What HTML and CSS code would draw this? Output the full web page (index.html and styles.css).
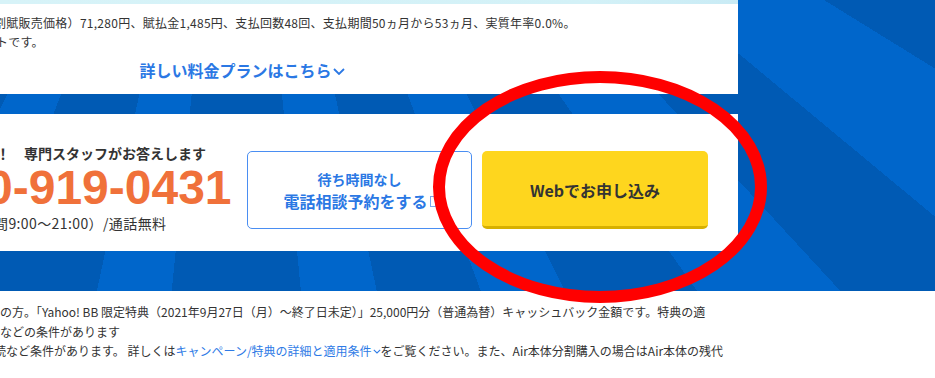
FILE: index.html
```html
<!DOCTYPE html>
<html lang="ja">
<head>
<meta charset="utf-8">
<title>Plan</title>
<link rel="stylesheet" href="styles.css">
</head>
<body>
<div class="page">
  <div class="hero">
    <section class="plan-card">
      <div class="plan-strip"></div>
      <div class="plan-body">
        <p class="note note-1">割賦販売価格）71,280円、賦払金1,485円、支払回数48回、支払期間50ヵ月から53ヵ月、実質年率0.0%。</p>
        <p class="note note-2">トです。</p>
        <a class="plan-link" href="#">詳しい料金プランはこちら<svg class="chev chev-lg" viewBox="0 0 12 7" width="12" height="7"><path d="M1 1 L6 6 L11 1" fill="none" stroke="currentColor" stroke-width="1.8"/></svg></a>
      </div>
    </section>
    <section class="contact-card">
      <div class="contact-info">
        <p class="contact-lead">！　専門スタッフがお答えします</p>
        <p class="contact-tel">0-919-0431</p>
        <p class="contact-hours">間9:00～21:00）/通話無料</p>
      </div>
      <a class="btn btn-reserve" href="#">
        <span class="btn-sub">待ち時間なし</span>
        <span class="btn-main">電話相談予約をする<span class="ext-icon"></span></span>
      </a>
      <a class="btn btn-apply" href="#">Webでお申し込み</a>
    </section>
  </div>
  <div class="footnotes">
    <p class="fn">の方。「Yahoo! BB 限定特典（2021年9月27日（月）～終了日未定）」25,000円分（普通為替）キャッシュバック金額です。特典の適</p>
    <p class="fn">などの条件があります</p>
    <p class="fn fn-cut">続など条件があります。 詳しくは<a class="fn-link" href="#">キャンペーン/特典の詳細と適用条件<svg class="chev chev-sm" viewBox="0 0 8 5" width="8" height="5"><path d="M0.8 0.8 L4 4 L7.2 0.8" fill="none" stroke="currentColor" stroke-width="1.1"/></svg></a>をご覧ください。また、Air本体分割購入の場合はAir本体の残代</p>
  </div>
  <svg class="annotation" width="340" height="240" viewBox="0 0 340 240">
    <ellipse cx="170" cy="118" rx="161" ry="110" fill="none" stroke="#ff0000" stroke-width="12"/>
  </svg>
</div>
</body>
</html>
```

FILE: styles.css
```css
* { box-sizing: border-box; }
html, body { margin: 0; padding: 0; }
body {
  width: 935px;
  height: 378px;
  overflow: hidden;
  background: #fff;
  font-family: "Noto Sans CJK JP", "Noto Sans", sans-serif;
  color: #333;
}
p { margin: 0; }
a { text-decoration: none; }

.page {
  position: relative;
  width: 935px;
  height: 378px;
}

.hero {
  height: 291px;
  padding-bottom: 40px;
  display: flex;
  flex-direction: column;
  gap: 20px;
  background:
    conic-gradient(from 0deg at 238px -362px,
      #005ab4 0deg 121.7deg,
      #0066cb 121.7deg 129.7deg,
      #005ab4 129.7deg 137.3deg,
      #0066cb 137.3deg 144.9deg,
      #005ab4 144.9deg 153.4deg,
      #0066cb 153.4deg 159.6deg,
      #005ab4 159.6deg 168deg,
      #0066cb 168deg 174.5deg,
      #005ab4 174.5deg 185.8deg,
      #0066cb 185.8deg 192.2deg,
      #005ab4 192.2deg 201.2deg,
      #0066cb 201.2deg 206.8deg,
      #005ab4 206.8deg 215deg,
      #0066cb 215deg 221deg,
      #005ab4 221deg 360deg);
}

/* top plan card */
.plan-card {
  width: 738px;
  height: 94px;
  background: #fff;
  flex: none;
}
.plan-strip {
  height: 4px;
  background: linear-gradient(90deg, #d7f3f8 0%, #d3f1f7 80%, #c9ebf5 100%);
}
.plan-body {
  padding-top: 9px;
  display: flex;
  flex-direction: column;
  white-space: nowrap;
}
.note {
  font-size: 12px;
  line-height: 19px;
  color: #333;
}
.note-1 { margin-left: -6px; letter-spacing: 0.27px; }
.note-2 { margin-left: -4px; letter-spacing: 0.27px; }
.plan-link {
  margin-top: 9px;
  margin-left: -254px;
  width: 992px;
  text-align: center;
  font-size: 16px;
  line-height: 21px;
  font-weight: 700;
  color: #2b78e4;
}
.chev { display: inline-block; }
.chev-lg { margin-left: 1px; vertical-align: 2px; }
.chev-sm { margin-left: 1px; vertical-align: 2px; }

/* contact card */
.contact-card {
  width: 738px;
  height: 137px;
  background: #fff;
  flex: none;
  display: flex;
  align-items: flex-start;
  padding: 37px 30px 22px 0;
}
.contact-info {
  flex: 0 0 237px;
  margin-right: 10px;
  margin-top: -8px;
  white-space: nowrap;
}
.contact-lead {
  margin-left: -4px;
  font-size: 14px;
  line-height: 20px;
  font-weight: 700;
  color: #333;
}
.contact-tel {
  margin-left: -14px;
  font-family: "Liberation Sans", Arial, sans-serif;
  font-size: 48px;
  line-height: 50px;
  font-weight: 700;
  color: #f0713a;
}
.contact-hours {
  margin-left: -6px;
  font-size: 14px;
  line-height: 20px;
  letter-spacing: 0.4px;
  color: #333;
}

.btn {
  height: 78px;
  border-radius: 5px;
  display: flex;
  flex-direction: column;
  align-items: center;
  justify-content: center;
}
.btn-reserve {
  width: 225px;
  border: 1px solid #4a8ef2;
  color: #2b78e4;
  font-weight: 700;
  margin-right: 10px;
  padding-top: 1px;
}
.btn-sub {
  font-size: 14px;
  line-height: 20px;
}
.btn-main {
  font-size: 16px;
  line-height: 24px;
  display: flex;
  align-items: center;
}
.ext-icon {
  display: inline-block;
  width: 6px;
  height: 11px;
  border: 1px solid #7aa9ee;
  margin-left: 2px;
  margin-top: 2px;
}
.btn-apply {
  width: 226px;
  background: #fed61e;
  border-bottom: 3px solid #d7b000;
  color: #333;
  font-size: 16px;
  font-weight: 700;
  padding-top: 2px;
}

/* footnotes */
.footnotes {
  padding-top: 11px;
  white-space: nowrap;
}
.fn {
  font-size: 12px;
  line-height: 19.5px;
  color: #333;
}
.fn-cut { margin-left: -6px; }
.fn-link { color: #2f7be6; }

.annotation {
  position: absolute;
  left: 430px;
  top: 69px;
  pointer-events: none;
}
```
